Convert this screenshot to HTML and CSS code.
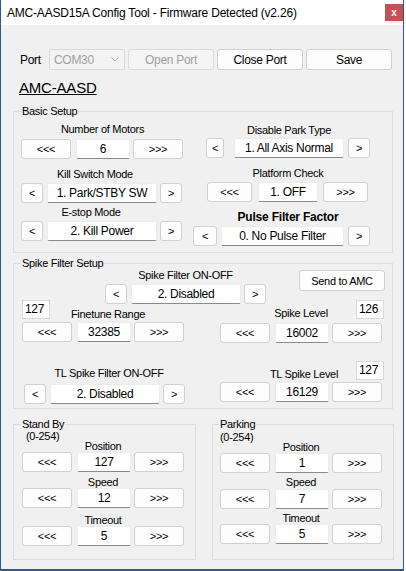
FILE: index.html
```html
<!DOCTYPE html>
<html lang="en">
<head>
    <meta charset="UTF-8">
    <meta name="viewport" content="width=device-width, initial-scale=1.0">
    <title>AMC-AASD15A Config Tool</title>
    <link rel="stylesheet" href="styles.css">
</head>
<body>
    <div class="window">
        <div class="titlebar">
            <span class="title">AMC-AASD15A Config Tool - Firmware Detected (v2.26)</span>
            <span class="close">x</span>
        </div>
        <div class="client">
            <div class="port-row">
                <span class="port-label">Port</span>
                <div class="combo">
                    <span>COM30</span>
                    <svg width="8" height="5" viewBox="0 0 8 5"><path d="M0.5 0.5 L4 4 L7.5 0.5" fill="none" stroke="#a8a8a8" stroke-width="1"/></svg>
                </div>
                <button type="button" class="btn wide" disabled>Open Port</button>
                <button type="button" class="btn wide">Close Port</button>
                <button type="button" class="btn wide">Save</button>
            </div>
            <div class="heading">AMC-AASD</div>

            <fieldset class="group basic">
                <legend>Basic Setup</legend>
                <div class="cols basic-body">
                    <div class="col-l">
                        <div class="lbl motors-lbl">Number of Motors</div>
                        <div class="row tri motors-row">
                            <button type="button" class="btn lt">&lt;&lt;&lt;</button>
                            <div class="val">6</div>
                            <button type="button" class="btn rt">&gt;&gt;&gt;</button>
                        </div>
                        <div class="lbl kill-lbl">Kill Switch Mode</div>
                        <div class="row sgl kill-row">
                            <button type="button" class="btn lt">&lt;</button>
                            <div class="val">1. Park/STBY SW</div>
                            <button type="button" class="btn rt">&gt;</button>
                        </div>
                        <div class="lbl estop-lbl">E-stop Mode</div>
                        <div class="row sgl estop-row">
                            <button type="button" class="btn lt">&lt;</button>
                            <div class="val">2. Kill Power</div>
                            <button type="button" class="btn rt">&gt;</button>
                        </div>
                    </div>
                    <div class="col-r">
                        <div class="lbl dpark-lbl">Disable Park Type</div>
                        <div class="row sgl park dpark-row">
                            <button type="button" class="btn lt">&lt;</button>
                            <div class="val">1. All Axis Normal</div>
                            <button type="button" class="btn rt">&gt;</button>
                        </div>
                        <div class="lbl pcheck-lbl">Platform Check</div>
                        <div class="row tri narrow pcheck-row">
                            <button type="button" class="btn lt">&lt;&lt;&lt;</button>
                            <div class="val">1. OFF</div>
                            <button type="button" class="btn rt">&gt;&gt;&gt;</button>
                        </div>
                        <div class="lbl pulse-lbl">Pulse Filter Factor</div>
                        <div class="row sgl pulse pulse-row">
                            <button type="button" class="btn lt">&lt;</button>
                            <div class="val">0. No Pulse Filter</div>
                            <button type="button" class="btn rt">&gt;</button>
                        </div>
                    </div>
                </div>
            </fieldset>

            <fieldset class="group spike">
                <legend>Spike Filter Setup</legend>
                <div class="spike-body">
                    <div class="spike-top">
                        <div class="onoff">
                            <div class="lbl onoff-lbl">Spike Filter ON-OFF</div>
                            <div class="row sgl onoff-row">
                                <button type="button" class="btn lt">&lt;</button>
                                <div class="val">2. Disabled</div>
                                <button type="button" class="btn rt">&gt;</button>
                            </div>
                        </div>
                        <button type="button" class="btn send">Send to AMC</button>
                    </div>
                    <div class="cols spike-cols">
                        <div class="col-l">
                            <div class="head fine-head">
                                <div class="box fine-box">127</div>
                                <div class="lbl fine-lbl">Finetune Range</div>
                            </div>
                            <div class="row tri fine-row">
                                <button type="button" class="btn lt">&lt;&lt;&lt;</button>
                                <div class="val">32385</div>
                                <button type="button" class="btn rt">&gt;&gt;&gt;</button>
                            </div>
                            <div class="lbl tlon-lbl">TL Spike Filter ON-OFF</div>
                            <div class="row sgl tlon-row">
                                <button type="button" class="btn lt">&lt;</button>
                                <div class="val">2. Disabled</div>
                                <button type="button" class="btn rt">&gt;</button>
                            </div>
                        </div>
                        <div class="col-r">
                            <div class="head level-head">
                                <div class="lbl level-lbl">Spike Level</div>
                                <div class="box">126</div>
                            </div>
                            <div class="row tri level-row">
                                <button type="button" class="btn lt">&lt;&lt;&lt;</button>
                                <div class="val">16002</div>
                                <button type="button" class="btn rt">&gt;&gt;&gt;</button>
                            </div>
                            <div class="head tllevel-head">
                                <div class="lbl tllevel-lbl">TL Spike Level</div>
                                <div class="box">127</div>
                            </div>
                            <div class="row tri tllevel-row">
                                <button type="button" class="btn lt">&lt;&lt;&lt;</button>
                                <div class="val">16129</div>
                                <button type="button" class="btn rt">&gt;&gt;&gt;</button>
                            </div>
                        </div>
                    </div>
                </div>
            </fieldset>

            <div class="pair">
                <fieldset class="group stby">
                    <legend>Stand By</legend>
                    <div class="pair-body">
                        <div class="range">(0-254)</div>
                        <div class="lbl cap-pos">Position</div>
                        <div class="row tri row-pos">
                            <button type="button" class="btn lt">&lt;&lt;&lt;</button>
                            <div class="val">127</div>
                            <button type="button" class="btn rt">&gt;&gt;&gt;</button>
                        </div>
                        <div class="lbl cap-speed">Speed</div>
                        <div class="row tri row-speed">
                            <button type="button" class="btn lt">&lt;&lt;&lt;</button>
                            <div class="val">12</div>
                            <button type="button" class="btn rt">&gt;&gt;&gt;</button>
                        </div>
                        <div class="lbl cap-time">Timeout</div>
                        <div class="row tri row-time">
                            <button type="button" class="btn lt">&lt;&lt;&lt;</button>
                            <div class="val">5</div>
                            <button type="button" class="btn rt">&gt;&gt;&gt;</button>
                        </div>
                    </div>
                </fieldset>
                <fieldset class="group parking">
                    <legend>Parking</legend>
                    <div class="pair-body">
                        <div class="range">(0-254)</div>
                        <div class="lbl cap-pos">Position</div>
                        <div class="row tri row-pos">
                            <button type="button" class="btn lt">&lt;&lt;&lt;</button>
                            <div class="val">1</div>
                            <button type="button" class="btn rt">&gt;&gt;&gt;</button>
                        </div>
                        <div class="lbl cap-speed">Speed</div>
                        <div class="row tri row-speed">
                            <button type="button" class="btn lt">&lt;&lt;&lt;</button>
                            <div class="val">7</div>
                            <button type="button" class="btn rt">&gt;&gt;&gt;</button>
                        </div>
                        <div class="lbl cap-time">Timeout</div>
                        <div class="row tri row-time">
                            <button type="button" class="btn lt">&lt;&lt;&lt;</button>
                            <div class="val">5</div>
                            <button type="button" class="btn rt">&gt;&gt;&gt;</button>
                        </div>
                    </div>
                </fieldset>
            </div>
        </div>
    </div>
</body>
</html>
```

FILE: styles.css
```css
body {
    margin: 0;
    background: #fff;
    font-family: "Liberation Sans", Arial, sans-serif;
    font-size: 11px;
    letter-spacing: -0.3px;
    color: #000;
}
.window {
    width: 404px;
    height: 571px;
    box-sizing: border-box;
    border: 1px solid #2b5a88;
    border-top: none;
    border-bottom-width: 2px;
    background: #f0f0f0;
}
.titlebar {
    height: 25px;
    background: #fff;
    display: flex;
    align-items: flex-start;
}
.title {
    margin-left: 6px;
    font-size: 12px;
    letter-spacing: -0.2px;
    line-height: 26px;
}
.close {
    margin-left: auto;
    margin-top: 4px;
    width: 18px;
    height: 17px;
    background: #c75050;
    color: #fff;
    font-weight: bold;
    font-size: 10px;
    display: flex;
    align-items: center;
    justify-content: center;
}
.client {
    padding: 24px 0 0 12px;
}
.port-row {
    display: flex;
    align-items: center;
    height: 21px;
}
.port-label {
    margin-left: 7px;
    width: 29px;
    font-size: 12px;
}
.combo {
    width: 76px;
    height: 21px;
    box-sizing: border-box;
    border: 1px solid #dadada;
    border-radius: 2px;
    background: #f3f3f3;
    color: #a0a0a0;
    font-size: 12px;
    display: flex;
    align-items: center;
    justify-content: space-between;
    padding: 0 5px 0 4px;
}
.btn {
    box-sizing: border-box;
    height: 20px;
    padding: 0;
    border: 1px solid #d0d0d0;
    border-radius: 3px;
    background: #fdfdfd;
    font: inherit;
    letter-spacing: inherit;
    color: #000;
}
.btn.wide {
    width: 86px;
    height: 21px;
    margin-left: 3px;
    font-size: 12px;
}
.btn:disabled {
    background: #f5f5f5;
    border-color: #dcdcdc;
    color: #a0a0a0;
}
.heading {
    margin: 9px 0 0 6px;
    font-size: 15px;
    letter-spacing: -0.2px;
    line-height: 18px;
    text-decoration: underline;
}
.group {
    margin: 0;
    padding: 0 7px;
    border: 1px solid #dcdcdc;
    box-sizing: border-box;
    min-width: 0;
}
.group legend {
    padding: 0 1px;
    line-height: 14px;
}
.cols {
    display: flex;
}
.col-l {
    width: 186px;
}
.col-r {
    flex: 1;
}
.lbl {
    line-height: 14px;
    text-align: center;
}
.row {
    display: flex;
}
.val {
    box-sizing: border-box;
    height: 20px;
    background: #fff;
    border: 1px solid #ececec;
    border-bottom-color: #8a8a8a;
    border-radius: 2px;
    display: flex;
    align-items: center;
    justify-content: center;
    font-size: 12px;
}
.tri .lt { width: 50px; }
.tri .val { width: 54px; margin-left: 5px; }
.tri .rt { width: 50px; margin-left: 3px; }
.narrow .lt { width: 45px; }
.narrow .val { width: 60px; margin-left: 6px; }
.narrow .rt { width: 45px; margin-left: 5px; }
.sgl .lt { width: 22px; }
.sgl .val { width: 110px; margin-left: 4px; }
.sgl .rt { width: 22px; margin-left: 3px; }
.park .lt { width: 18px; }
.park .val { margin-left: 10px; }
.park .rt { margin-left: 4px; }
.pulse .lt { width: 24px; }
.pulse .val { width: 123px; }
.pulse .rt { margin-left: 4px; }

/* basic setup */
.basic {
    width: 380px;
    margin-top: 7px;
}
.basic-body {
    height: 134px;
}
.motors-lbl { margin-top: 4px; width: 163px; }
.motors-row { margin-top: 3px; }
.kill-lbl { margin-top: 8px; width: 148px; }
.kill-row { margin-top: 2px; }
.estop-lbl { margin-top: 2px; width: 140px; }
.estop-row { margin-top: 2px; }
.dpark-lbl { margin-top: 5px; width: 192px; }
.dpark-row { margin-top: 1px; margin-left: 13px; }
.pcheck-lbl { margin-top: 8px; width: 190px; }
.pcheck-row { margin-top: 2px; margin-left: 14px; }
.pulse-lbl {
    margin-top: 8px;
    width: 190px;
    font-weight: bold;
    font-size: 12px;
    letter-spacing: -0.2px;
}
.pulse-row { margin-top: 2px; }

/* spike filter */
.spike {
    width: 380px;
    margin-top: 3px;
}
.spike-body {
    height: 138px;
}
.spike-top {
    display: flex;
    align-items: flex-start;
}
.onoff { margin: -2px 0 0 84px; }
.onoff-lbl { width: 161px; }
.onoff-row { margin-top: 2px; }
.send {
    width: 86px;
    height: 21px;
    margin-left: 33px;
}
.spike-cols { margin-top: -4px; }
.head {
    display: flex;
    align-items: flex-end;
}
.box {
    align-self: flex-start;
    box-sizing: border-box;
    width: 28px;
    height: 19px;
    padding: 0 2px;
    background: #fff;
    border: 1px solid #d9d9d9;
    font-size: 12px;
    line-height: 16px;
}
.fine-head { height: 21px; }
.fine-box { margin-left: 1px; }
.fine-lbl { width: 116px; }
.fine-row { margin-top: 1px; margin-left: 1px; }
.tlon-lbl { margin-top: 24px; margin-left: 3px; width: 170px; }
.tlon-row { margin-top: 4px; margin-left: 3px; }
.level-head { height: 20px; }
.level-lbl { margin-left: 40px; width: 108px; }
.level-head .box,
.tllevel-head .box { margin-left: 1px; }
.level-row { margin-top: 3px; margin-left: 13px; }
.tllevel-head { height: 20px; margin-top: 18px; }
.tllevel-lbl { margin-left: 46px; width: 102px; }
.tllevel-row { margin-top: 1px; margin-left: 13px; }

/* stand by / parking */
.pair {
    display: flex;
    gap: 16px;
    margin-top: 8px;
}
.stby { width: 183px; }
.parking { width: 182px; padding-left: 6px; }
.pair-body { height: 129px; }
.range { line-height: 14px; }
.cap-pos, .cap-speed, .cap-time { width: 164px; }
.row-pos, .row-speed, .row-time { margin-left: 1px; }
.stby .range { margin: -2px 0 0 5px; }
.stby .cap-pos { margin-top: -4px; }
.stby .row-pos { margin-top: -1px; }
.stby .cap-speed { margin-top: 3px; }
.stby .row-speed { margin-top: -1px; }
.stby .cap-time { margin-top: 5px; }
.stby .row-time { margin-top: -1px; }
.parking .range { margin: -1px 0 0 1px; }
.parking .cap-pos { margin-top: -4px; }
.parking .row-pos { margin-top: -1px; }
.parking .cap-speed { margin-top: 2px; }
.parking .row-speed { margin-top: 0; }
.parking .cap-time { margin-top: 2px; }
.parking .row-time { margin-top: -1px; }
```
